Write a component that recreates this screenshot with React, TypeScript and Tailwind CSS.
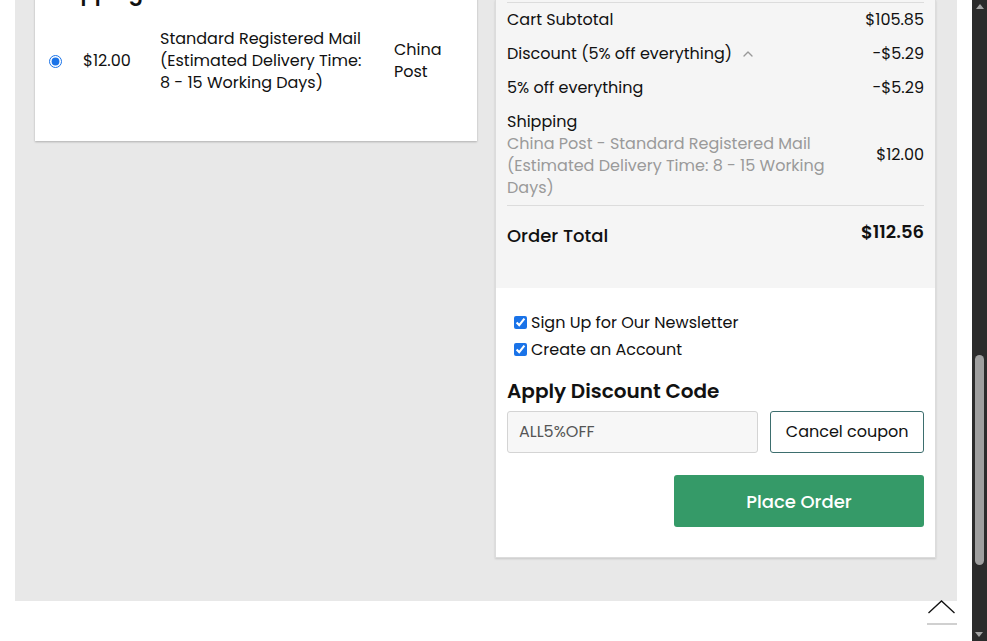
import { ChevronUp } from "lucide-react";

const FONT = "font-['Poppins','Open_Sans','Noto_Sans',sans-serif]";

function SummaryRow({ label, value, extra }: { label: string; value: string; extra?: boolean }) {
  return (
    <div className="flex items-center justify-between py-[6px] text-[16px] leading-[22px] text-[#111]">
      <span className="flex items-center">
        {label}
        {extra && <ChevronUp className="ml-[8px] h-4 w-4 text-[#999]" strokeWidth={2} />}
      </span>
      <span>{value}</span>
    </div>
  );
}

export default function App() {
  return (
    <div className={`relative flex h-[641px] w-[987px] overflow-hidden bg-white ${FONT}`}>
      <div className="flex-1">
        <div className="ml-[15px] flex h-[601px] w-[942px] items-start gap-[18px] bg-[#e8e8e8] pl-[20px]">
          {/* shipping methods card */}
          <div className="mt-[-30px] w-[442px] bg-white pt-[4px] pb-[47px] pl-[13px] pr-[12px] shadow-[0_1px_2px_rgba(0,0,0,0.25)]">
            <h2 className="pt-[2px] text-[21px] font-semibold leading-[34px] text-[#111]">Shipping Methods</h2>
            <div className="mt-[18px] flex items-center text-[16px] leading-[22px] text-[#111]">
              <input type="radio" defaultChecked className="ml-[1px] h-[13px] w-[13px] accent-[#1a73e8]" />
              <span className="ml-[21px] w-[77px]">$12.00</span>
              <span className="w-[234px] pr-[28px]">
                Standard Registered Mail (Estimated Delivery Time: 8 - 15 Working Days)
              </span>
              <span className="w-[70px]">China Post</span>
            </div>
          </div>

          {/* order summary */}
          <div className="w-[441px] border-x border-b border-[#dcdcdc] bg-white shadow-[0_1px_2px_rgba(0,0,0,0.15)]">
            <div className="bg-[#f5f5f5] px-[11px] pt-[2px] pb-[39px]">
              <div className="border-t border-[#dcdcdc]">
                <SummaryRow label="Cart Subtotal" value="$105.85" />
                <SummaryRow label="Discount (5% off everything)" value="-$5.29" extra />
                <SummaryRow label="5% off everything" value="-$5.29" />
                <div className="flex items-center justify-between py-[6px] text-[16px] leading-[22px]">
                  <div className="w-[330px]">
                    <div className="text-[#111]">Shipping</div>
                    <div className="text-[#9a9a9a]">
                      China Post - Standard Registered Mail (Estimated Delivery Time: 8 - 15 Working Days)
                    </div>
                  </div>
                  <span className="text-[#111]">$12.00</span>
                </div>
              </div>
              <div className="flex items-start justify-between border-t border-[#dcdcdc] pt-[13px] text-[#111]">
                <span className="mt-[4px] text-[18px] font-medium leading-[26px]">Order Total</span>
                <span className="text-[18px] font-semibold leading-[26px]">$112.56</span>
              </div>
            </div>

            <div className="px-[11px] pt-[21px] pb-[30px]">
              <label className="flex items-center text-[16px] leading-[27px] text-[#111]">
                <input type="checkbox" defaultChecked className="ml-[7px] mr-[4px] h-[13px] w-[13px] accent-[#1a73e8]" />
                Sign Up for Our Newsletter
              </label>
              <label className="flex items-center text-[16px] leading-[27px] text-[#111]">
                <input type="checkbox" defaultChecked className="ml-[7px] mr-[4px] h-[13px] w-[13px] accent-[#1a73e8]" />
                Create an Account
              </label>
              <h3 className="mt-[13px] text-[20px] font-semibold leading-[30px] text-[#111]">Apply Discount Code</h3>
              <div className="mt-[5px] flex gap-[12px]">
                <div className="flex h-[42px] w-[252px] items-center rounded-[3px] border border-[#d4d4d4] bg-[#f7f7f7] px-[11px] text-[16px] text-[#555]">
                  ALL5%OFF
                </div>
                <button className="h-[42px] w-[154px] rounded-[3px] border border-[#3d6e6e] bg-white text-[16px] text-[#111]">
                  Cancel coupon
                </button>
              </div>
              <div className="mt-[22px] flex justify-end">
                <button className="h-[52px] w-[250px] rounded-[3px] bg-[#359a68] text-[18px] font-medium text-white">
                  Place Order
                </button>
              </div>
            </div>
          </div>
        </div>
      </div>

      {/* scrollbar */}
      <div className="relative w-[15px] bg-[#2b2b2b]">
        <div className="mx-auto mt-[4px] h-0 w-0 border-x-[4px] border-b-[5px] border-x-transparent border-b-[#a3a3a3]" />
        <div className="absolute left-[3px] top-[355px] h-[210px] w-[9px] rounded-full bg-[#9f9f9f]" />
        <div className="absolute bottom-[4px] left-[3px] h-0 w-0 border-x-[4px] border-t-[5px] border-x-transparent border-t-[#a3a3a3]" />
      </div>

      {/* back to top */}
      <div className="absolute left-[927px] top-[599px] w-[30px]">
        <svg width="30" height="16" viewBox="0 0 30 16" fill="none" stroke="#111" strokeWidth="1.3">
          <path d="M1.5 14 L14.5 2 L27.5 14" />
        </svg>
        <div className="mt-[8px] h-[2px] w-[30px] bg-[#d0d0d0]" />
      </div>
    </div>
  );
}
